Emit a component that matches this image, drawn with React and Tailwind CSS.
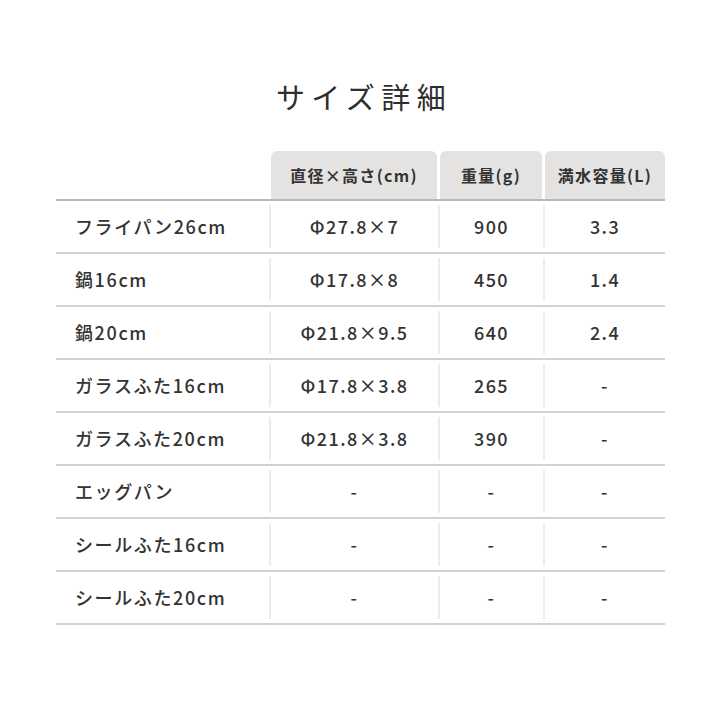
const rows = [
  ["フライパン26cm", "Φ27.8×7", "900", "3.3"],
  ["鍋16cm", "Φ17.8×8", "450", "1.4"],
  ["鍋20cm", "Φ21.8×9.5", "640", "2.4"],
  ["ガラスふた16cm", "Φ17.8×3.8", "265", "-"],
  ["ガラスふた20cm", "Φ21.8×3.8", "390", "-"],
  ["エッグパン", "-", "-", "-"],
  ["シールふた16cm", "-", "-", "-"],
  ["シールふた20cm", "-", "-", "-"],
];

const font = { fontFamily: '"Noto Sans CJK JP", "Noto Sans", sans-serif' };

export default function App() {
  return (
    <div className="w-[720px] h-[720px] bg-white text-[#333]" style={font}>
      {/* Title */}
      <h2 className="pt-[76px] pl-[8px] text-center text-[29px] font-normal tracking-[0.22em] leading-[40px] text-[#2e2e2e]">
        サイズ詳細
      </h2>

      <div className="mt-[35px] ml-[56px] w-[609px]">
        {/* Header */}
        <div className="grid grid-cols-[212px_166px_102px_120px] gap-x-[3px] border-b-2 border-[#b8b8b8]">
          <div />
          {["直径×高さ(cm)", "重量(g)", "満水容量(L)"].map((h) => (
            <div
              key={h}
              className="h-[48px] bg-[#e4e3e1] rounded-t-md flex items-center justify-center text-[16px] font-bold tracking-[0.08em] text-[#333]"
            >
              {h}
            </div>
          ))}
        </div>

        {/* Rows */}
        {rows.map((r) => (
          <div key={r[0]} className="border-b-2 border-[#d2d2d2]">
            <div className="grid grid-cols-[213px_169px_105px_122px] py-[4px]">
              <div className="h-[43px] flex items-center pl-[19px] text-[18px] font-medium tracking-[0.09em]">
                {r[0]}
              </div>
              {r.slice(1).map((c, i) => (
                <div
                  key={i}
                  className="h-[43px] border-l-2 border-[#ececec] flex items-center justify-center text-[18px] font-medium tracking-[0.08em]"
                >
                  {c}
                </div>
              ))}
            </div>
          </div>
        ))}
      </div>
    </div>
  );
}
